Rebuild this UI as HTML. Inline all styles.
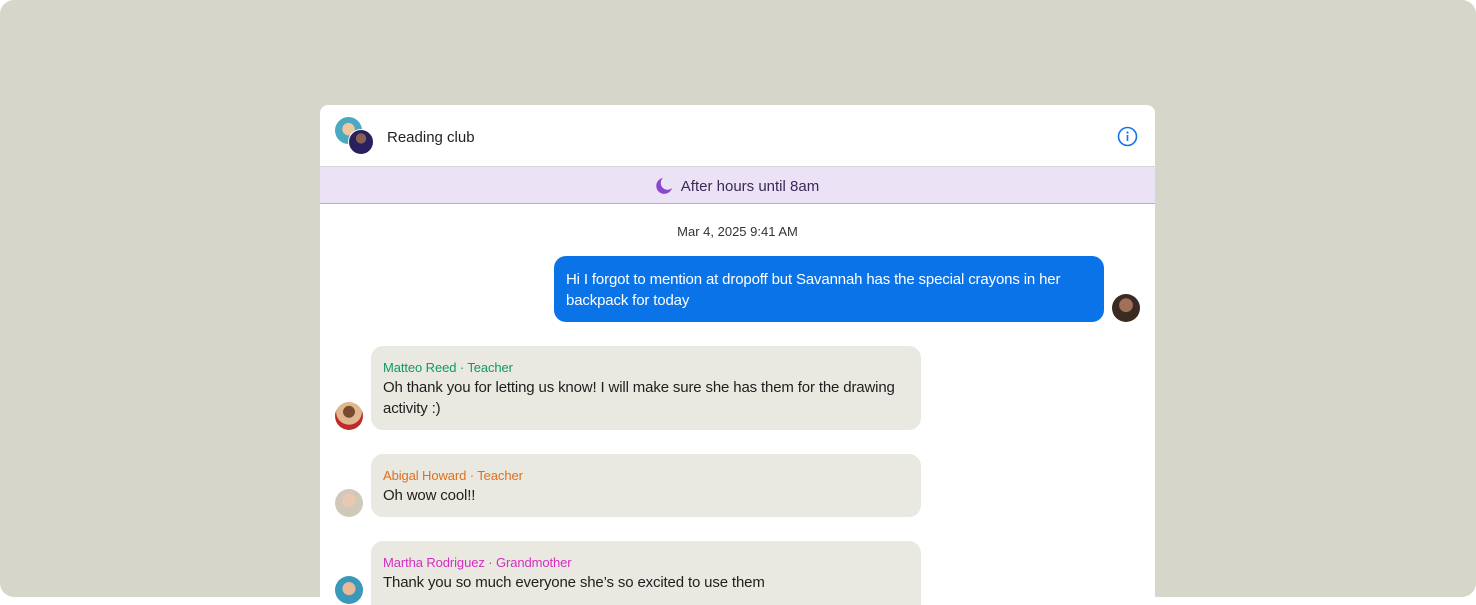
<!DOCTYPE html>
<html><head><style>
*{margin:0;padding:0;box-sizing:border-box}
html{background:#fff}
body{width:1476px;height:597px;background:#d6d6ca;font-family:"Liberation Sans",sans-serif;position:relative;overflow:hidden;color:#1f1f1f;border-radius:14px}
.card{position:absolute;left:320px;top:105px;width:835px;height:500px;background:#fff;border-radius:8px 8px 0 0;overflow:hidden}
.hdr{position:absolute;left:0;top:0;width:835px;height:62px;border-bottom:1px solid #d8d8d0}
.title{position:absolute;left:67px;top:24px;font-size:15px;color:#222}
.ban{position:absolute;left:0;top:62px;width:835px;height:37px;background:#ebe3f5;border-bottom:1px solid #c6a6e2;font-size:15px;color:#3a2a5a;text-align:center;line-height:39px}
.av{position:absolute;width:28px;height:28px;border-radius:50%}
.b{position:absolute;border-radius:12px;font-size:15px;line-height:21px;padding:0 12px;letter-spacing:-0.15px}
.g{background:#e9e8e1;left:51px;width:550px}
.n{font-size:13px;line-height:16px;letter-spacing:-0.1px;margin-bottom:1px}
</style></head><body>
<div class="card">
 <div class="hdr">
  <div class="av" style="left:15px;top:12px;width:27px;height:27px;background:radial-gradient(circle at 50% 45%,#f0c8a0 30%,#4aa8c0 32%)"></div>
  <div class="av" style="left:28px;top:24px;width:26px;height:26px;background:radial-gradient(circle at 50% 35%,#8a6050 25%,#2a2060 27%);border:1px solid #fff"></div>
  <div class="title">Reading club</div>
  <svg style="position:absolute;left:797px;top:21px" width="21" height="21" viewBox="0 0 21 21"><circle cx="10.5" cy="10.5" r="9" fill="none" stroke="#1673e6" stroke-width="1.6"/><rect x="9.7" y="9" width="1.6" height="6" fill="#1673e6"/><circle cx="10.5" cy="6.5" r="1.1" fill="#1673e6"/></svg>
 </div>
 <div class="ban"><svg style="vertical-align:-3px;margin-right:8px" width="17" height="17" viewBox="0 0 17 17"><path d="M7 1A8 8 0 1 0 16 11 6.5 6.5 0 0 1 7 1Z" fill="#8b45cf"/></svg>After hours until 8am</div>
 <div style="position:absolute;left:0;width:835px;top:119px;text-align:center;font-size:13px;color:#333">Mar 4, 2025 9:41 AM</div>
 <div class="b" style="left:234px;top:151px;width:550px;height:66px;background:#0b73e8;color:#fff;padding-top:13px">Hi I forgot to mention at dropoff but Savannah has the special crayons in her backpack for today</div>
 <div class="av" style="left:792px;top:189px;background:radial-gradient(circle at 50% 40%,#a0705a 30%,#3a2a20 33%)"></div>
 <div class="b g" style="top:241px;height:84px;padding-top:14px"><div class="n" style="color:#119a5e">Matteo Reed · Teacher</div>Oh thank you for letting us know! I will make sure she has them for the drawing activity :)</div>
 <div class="av" style="left:15px;top:297px;background:radial-gradient(circle at 50% 35%,#7a4a30 25%,#e0b890 27%,#e0b890 55%,#c02a2a 57%)"></div>
 <div class="b g" style="top:349px;height:63px;padding-top:14px"><div class="n" style="color:#e0701a">Abigal Howard · Teacher</div>Oh wow cool!!</div>
 <div class="av" style="left:15px;top:384px;background:radial-gradient(circle at 50% 40%,#e8c8b0 30%,#d0c8b8 33%)"></div>
 <div class="b g" style="top:436px;height:80px;padding-top:14px"><div class="n" style="color:#d42ec0">Martha Rodriguez · Grandmother</div>Thank you so much everyone she’s so excited to use them</div>
 <div class="av" style="left:15px;top:471px;background:radial-gradient(circle at 50% 45%,#e8b898 30%,#3a98b8 33%)"></div>
</div>
</body></html>
